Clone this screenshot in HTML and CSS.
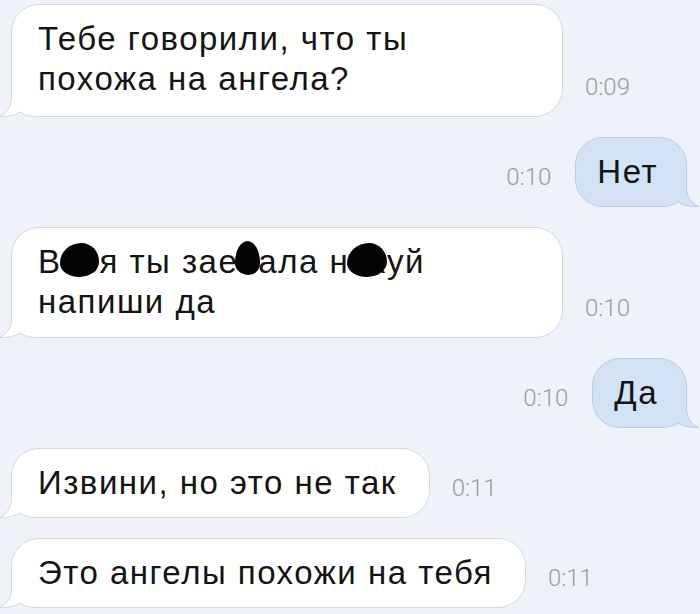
FILE: index.html
```html
<!DOCTYPE html>
<html lang="ru">
<head>
<meta charset="utf-8">
<link rel="stylesheet" href="styles.css">
</head>
<body>
<div class="chat">
  <div class="row in">
    <div class="bubble in wide first">
      <svg class="tail" viewBox="0 0 40 40"><path class="fill" d="M12.5 0 L12.5 20 C12.5 30 8 36 0.5 39.5 C9 40 16 38 21 35 C26 38.5 32 39.5 40 39.5 L40 0 Z"/><path class="edge" d="M12.5 0 L12.5 20 C12.5 30 8 36 0.5 39.5 C9 40 16 38 21 35 C26 38.5 32 39.5 40 39.5"/></svg>
      <p class="text">Тебе говорили, что ты<br>похожа на ангела?</p>
    </div>
    <span class="time">0:09</span>
  </div>
  <div class="row out">
    <span class="time">0:10</span>
    <div class="bubble out">
      <svg class="tail" viewBox="0 0 40 40"><path class="fill" d="M12.5 0 L12.5 20 C12.5 30 8 36 0.5 39.5 C9 40 16 38 21 35 C26 38.5 32 39.5 40 39.5 L40 0 Z"/><path class="edge" d="M12.5 0 L12.5 20 C12.5 30 8 36 0.5 39.5 C9 40 16 38 21 35 C26 38.5 32 39.5 40 39.5"/></svg>
      <p class="text">Нет</p>
    </div>
  </div>
  <div class="row in">
    <div class="bubble in wide">
      <svg class="tail" viewBox="0 0 40 40"><path class="fill" d="M12.5 0 L12.5 20 C12.5 30 8 36 0.5 39.5 C9 40 16 38 21 35 C26 38.5 32 39.5 40 39.5 L40 0 Z"/><path class="edge" d="M12.5 0 L12.5 20 C12.5 30 8 36 0.5 39.5 C9 40 16 38 21 35 C26 38.5 32 39.5 40 39.5"/></svg>
      <p class="text">В<span class="blot b1">ас</span>я ты зае<span class="blot b2">б</span>ала н<span class="blot b3">ах</span>уй<br>напиши да</p>
    </div>
    <span class="time">0:10</span>
  </div>
  <div class="row out">
    <span class="time">0:10</span>
    <div class="bubble out">
      <svg class="tail" viewBox="0 0 40 40"><path class="fill" d="M12.5 0 L12.5 20 C12.5 30 8 36 0.5 39.5 C9 40 16 38 21 35 C26 38.5 32 39.5 40 39.5 L40 0 Z"/><path class="edge" d="M12.5 0 L12.5 20 C12.5 30 8 36 0.5 39.5 C9 40 16 38 21 35 C26 38.5 32 39.5 40 39.5"/></svg>
      <p class="text">Да</p>
    </div>
  </div>
  <div class="row in">
    <div class="bubble in">
      <svg class="tail" viewBox="0 0 40 40"><path class="fill" d="M12.5 0 L12.5 20 C12.5 30 8 36 0.5 39.5 C9 40 16 38 21 35 C26 38.5 32 39.5 40 39.5 L40 0 Z"/><path class="edge" d="M12.5 0 L12.5 20 C12.5 30 8 36 0.5 39.5 C9 40 16 38 21 35 C26 38.5 32 39.5 40 39.5"/></svg>
      <p class="text">Извини, но это не так</p>
    </div>
    <span class="time">0:11</span>
  </div>
  <div class="row in">
    <div class="bubble in">
      <svg class="tail" viewBox="0 0 40 40"><path class="fill" d="M12.5 0 L12.5 20 C12.5 30 8 36 0.5 39.5 C9 40 16 38 21 35 C26 38.5 32 39.5 40 39.5 L40 0 Z"/><path class="edge" d="M12.5 0 L12.5 20 C12.5 30 8 36 0.5 39.5 C9 40 16 38 21 35 C26 38.5 32 39.5 40 39.5"/></svg>
      <p class="text">Это ангелы похожи на тебя</p>
    </div>
    <span class="time">0:11</span>
  </div>
</div>
</body>
</html>
```
FILE: styles.css
```css
html, body {
  margin: 0;
  padding: 0;
  background: #eef2f9;
}
.chat {
  width: 700px;
  height: 614px;
  overflow: hidden;
  box-sizing: border-box;
  padding: 4px 13px 0 11px;
  display: flex;
  flex-direction: column;
  gap: 20px;
  font-family: "Liberation Sans", Arial, sans-serif;
}
.row {
  display: flex;
  align-items: flex-end;
}
.row.in {
  justify-content: flex-start;
  gap: 22px;
}
.row.out {
  justify-content: flex-end;
  gap: 24px;
}
.bubble {
  position: relative;
  box-sizing: border-box;
  border-radius: 28px;
  padding: 14px 32px 14px 26px;
  border: 1px solid #d4d8df;
}
.bubble.in {
  background: #ffffff;
}
.bubble.out {
  background: #d4e2f5;
  border-color: #bccbe0;
  padding: 14px 28px 14px 21px;
}
.bubble.wide {
  width: 552px;
  padding-top: 14px;
  padding-bottom: 15px;
}
.bubble.wide.first {
  padding-bottom: 17px;
}
.tail {
  position: absolute;
  bottom: -1px;
  width: 40px;
  height: 40px;
  overflow: visible;
}
.bubble.in .tail {
  left: -13px;
}
.bubble.out .tail {
  right: -13px;
  transform: scaleX(-1);
}
.tail .fill {
  fill: #ffffff;
}
.tail .edge {
  fill: none;
  stroke: #d4d8df;
  stroke-width: 1;
}
.bubble.out .tail .fill {
  fill: #d4e2f5;
}
.bubble.out .tail .edge {
  stroke: #bccbe0;
}
.text {
  position: relative;
  z-index: 1;
  margin: 0;
  font-size: 33px;
  line-height: 40px;
  letter-spacing: 1.5px;
  color: #141414;
  white-space: nowrap;
}
.time {
  font-family: Roboto, "Liberation Sans", sans-serif;
  font-weight: 300;
  font-size: 24px;
  line-height: 24px;
  color: #9a9da2;
  margin-bottom: 18px;
}
.blot {
  position: relative;
}
.blot::after {
  content: "";
  position: absolute;
  background: #050505;
  left: -2px;
  right: 0;
  top: 0;
  bottom: 3px;
  border-radius: 55% 45% 50% 50% / 60% 55% 45% 40%;
}
.b2::after {
  left: -3px;
  right: -2px;
  top: -2px;
  bottom: 5px;
  border-radius: 50% 50% 45% 55% / 65% 65% 35% 35%;
}
```
